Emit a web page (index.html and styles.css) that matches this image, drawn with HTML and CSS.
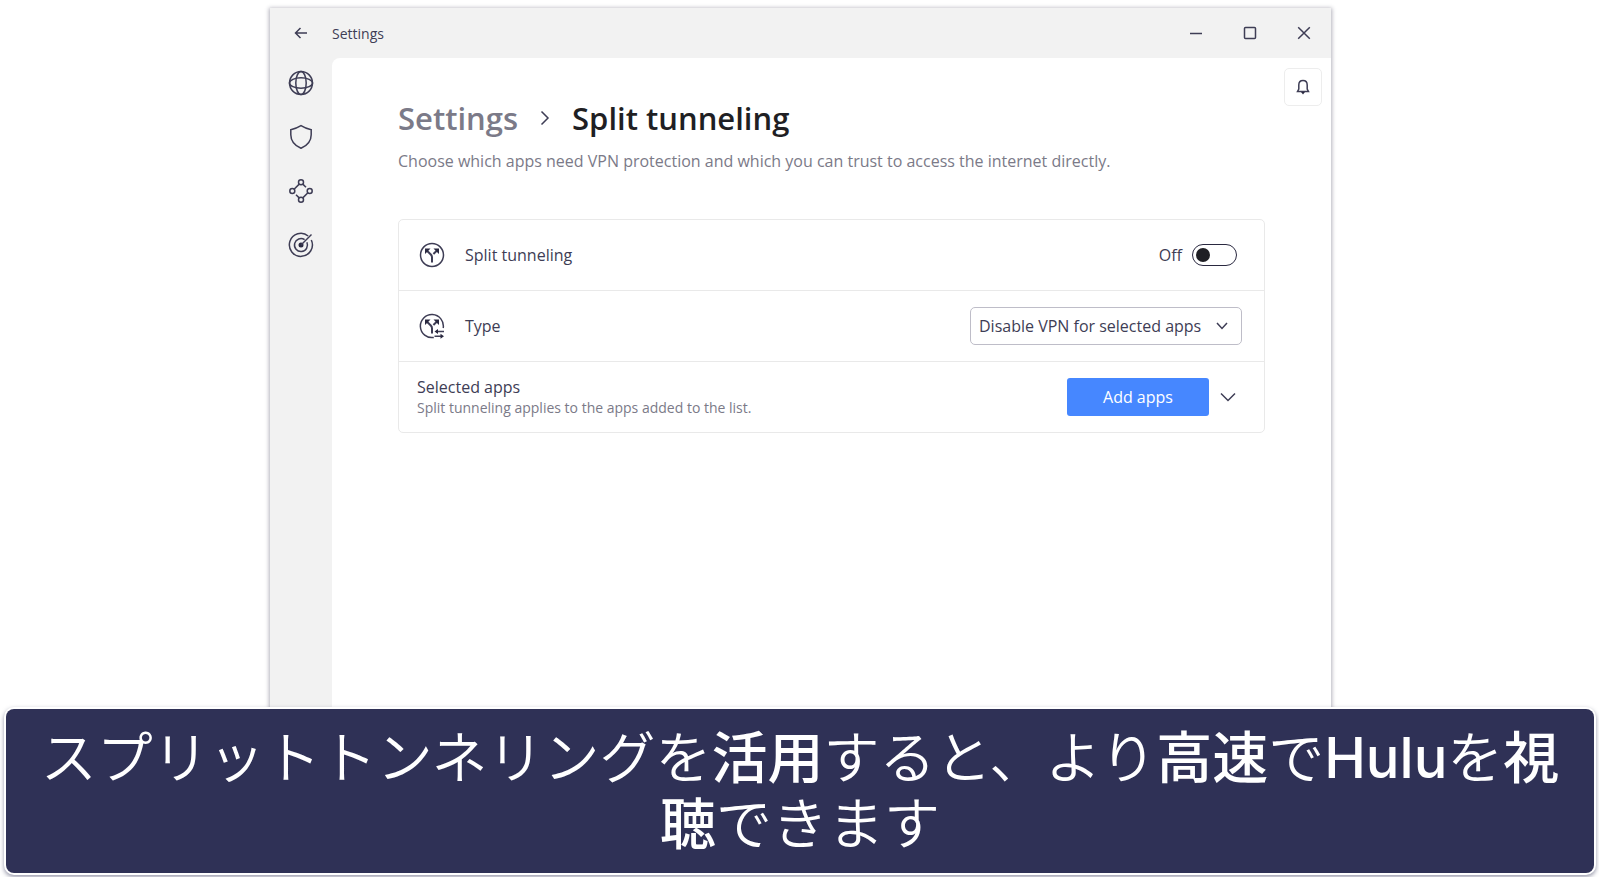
FILE: index.html
```html
<!DOCTYPE html>
<html lang="ja">

<head>
  <meta charset="UTF-8">
  <meta name="viewport" content="width=device-width, initial-scale=1.0">
  <title>Split tunneling</title>
  <link rel="stylesheet" href="styles.css">
</head>

<body>

  <div class="window" lang="en">
    <header class="titlebar">
      <button type="button" class="back" aria-label="Back">
        <svg width="14" height="14" viewBox="0 0 14 14"><path d="M13 7H1.5M6.5 2L1.5 7l5 5" /></svg>
      </button>
      <span class="title">Settings</span>
      <button type="button" class="control" aria-label="Minimize">
        <svg width="14" height="14" viewBox="0 0 14 14"><path d="M1 7.5h12" /></svg>
      </button>
      <button type="button" class="control" aria-label="Maximize">
        <svg width="14" height="14" viewBox="0 0 14 14"><rect x="1.5" y="1.5" width="11" height="11" rx="1" /></svg>
      </button>
      <button type="button" class="control" aria-label="Close">
        <svg width="14" height="14" viewBox="0 0 14 14"><path d="M1.2 1.2l11.6 11.6M12.8 1.2L1.2 12.8" /></svg>
      </button>
    </header>

    <div class="content">
      <nav class="sidebar">
        <a href="#" aria-label="VPN">
          <svg width="26" height="26" viewBox="0 0 26 26">
            <circle cx="13" cy="13" r="11.5" />
            <ellipse cx="13" cy="13" rx="5.2" ry="11.5" />
            <ellipse cx="13" cy="13" rx="11.5" ry="5.2" />
          </svg>
        </a>
        <a href="#" aria-label="Threat protection">
          <svg width="26" height="26" viewBox="0 0 26 26">
            <path d="M13 1.7c3 1.9 6.4 3.3 10.2 4v5c0 6-3.7 10.7-10.2 13.6C6.5 21.4 2.8 16.7 2.8 10.7v-5C6.6 5 10 3.6 13 1.7z" />
          </svg>
        </a>
        <a href="#" aria-label="Meshnet">
          <svg width="26" height="26" viewBox="0 0 26 26">
            <circle cx="13" cy="4.3" r="2.5" />
            <circle cx="4.3" cy="13" r="2.5" />
            <circle cx="21.7" cy="13" r="2.5" />
            <circle cx="13" cy="21.7" r="2.5" />
            <path d="M6.1 11.2l5.1-5.1M14.8 6.1l3.2 3.2M19.9 14.8l-5.1 5.1M11.2 19.9L8 16.7" />
          </svg>
        </a>
        <a href="#" aria-label="Dark web monitor">
          <svg width="26" height="26" viewBox="0 0 26 26">
            <path d="M20.2 4A11.5 11.5 0 1 0 23.3 8" />
            <path d="M16.6 7.6A6.5 6.5 0 1 0 18.9 10.3" />
            <circle class="fill" cx="13" cy="13" r="2.5" />
            <path d="M13 13L23.5 2.5" />
          </svg>
        </a>
      </nav>

      <main class="page">
        <button type="button" class="bell" aria-label="Notifications">
          <svg width="16" height="16" viewBox="0 0 16 16">
            <path d="M8 1.5c-2.7 0-4.2 1.9-4.2 4.5v4L2.5 12.5h11L12.2 10V6c0-2.6-1.5-4.5-4.2-4.5z" />
            <path class="fill" d="M6 13h4L8 15.5z" />
          </svg>
        </button>

        <h1>
          <a href="#">Settings</a>
          <svg width="10" height="16" viewBox="0 0 10 16"><path d="M1.5 1.5L8 8l-6.5 6.5" /></svg>
          <span>Split tunneling</span>
        </h1>
        <p class="intro">Choose which apps need VPN protection and which you can trust to access the internet directly.</p>

        <section class="card">
          <div class="row">
            <svg width="26" height="26" viewBox="0 0 26 26">
              <circle cx="13" cy="13" r="11.5" />
              <path class="thick" d="M13 20.5v-5.3c0-1.2-.4-1.9-1.2-2.7L8 8.7M14.4 11.9L18 8.5" />
              <path class="fill" d="M6 6.5h5.5L6 12zM20 6.5h-5.5L20 12z" />
            </svg>
            <label for="split">Split tunneling</label>
            <div class="switch">
              <span>Off</span>
              <input type="checkbox" role="switch" id="split">
            </div>
          </div>

          <div class="row">
            <svg width="26" height="26" viewBox="0 0 26 26">
              <path d="M14.8 24.4A11.5 11.5 0 1 1 24.2 15" />
              <path class="thick" d="M13 20.5v-5.3c0-1.2-.4-1.9-1.2-2.7L8 8.7M14.4 11.9L18 8.5" />
              <path class="fill" d="M6 6.5h5.5L6 12zM20 6.5h-5.5L20 12z" />
              <path d="M17 18.5h8M15.5 23.3h7" />
              <path class="fill" d="M19 16v5l-3.5-2.5zM21.5 20.8v5l3.5-2.5z" />
            </svg>
            <label for="type">Type</label>
            <div class="select">
              <select id="type">
                <option>Disable VPN for selected apps</option>
                <option>Enable VPN for selected apps</option>
              </select>
              <svg width="12" height="8" viewBox="0 0 12 8"><path d="M1 1l5 5.5L11 1" /></svg>
            </div>
          </div>

          <div class="row apps">
            <div class="apps-text">
              <h2>Selected apps</h2>
              <p>Split tunneling applies to the apps added to the list.</p>
            </div>
            <button type="button" class="add">Add apps</button>
            <button type="button" class="expand" aria-label="Show apps">
              <svg width="16" height="10" viewBox="0 0 16 10"><path d="M1 1.5l7 7 7-7" /></svg>
            </button>
          </div>
        </section>
      </main>
    </div>
  </div>

  <p class="caption">スプリットトンネリングを<b>活用</b>すると、より<b>高速</b>で<b class="latin">Hulu</b>を<b>視聴</b>できます</p>

</body>

</html>
```
FILE: styles.css
```css
* {
  box-sizing: border-box;
}

body {
  display: flex;
  flex-direction: column;
  min-height: 100vh;
  margin: 0;
  background-color: #fff;
  color: #3e3d55;
  font-family: "Open Sans", "Noto Sans", sans-serif;
  font-size: 16px;
}

button {
  display: flex;
  align-items: center;
  justify-content: center;
  padding: 0;
  border: none;
  background: none;
  color: inherit;
  font: inherit;
  cursor: pointer;
}

a {
  color: inherit;
  text-decoration: none;
}

svg {
  flex: none;
  display: block;
  fill: none;
  stroke: #3e3d55;
  stroke-width: 1.5;
}

.fill {
  fill: #2a2940;
  stroke: none;
}

.thick {
  stroke-width: 2;
}

/* app window */
.window {
  flex: 1;
  display: flex;
  flex-direction: column;
  margin: 8px 268px 0 270px;
  background-color: #f2f2f2;
  box-shadow: 0 1px 4px 1px rgba(62, 61, 85, 0.4);
}

.titlebar {
  display: flex;
  align-items: center;
  height: 50px;
}

.back {
  width: 62px;
  height: 50px;
}

.title {
  flex: 1;
  font-size: 14px;
}

.control {
  width: 54px;
  height: 50px;
}

.content {
  flex: 1;
  display: flex;
}

.sidebar {
  display: flex;
  flex-direction: column;
  align-items: center;
  gap: 28px;
  width: 62px;
  padding-top: 12px;
}

.page {
  flex: 1;
  position: relative;
  padding: 38px 66px 0;
  border-top-left-radius: 8px;
  background-color: #fff;
}

.bell {
  position: absolute;
  top: 10px;
  right: 9px;
  width: 38px;
  height: 38px;
  border: 1px solid #ededed;
  border-radius: 5px;
}

h1 {
  display: flex;
  align-items: center;
  gap: 22px;
  margin: 0;
  color: #1f1f24;
  font-size: 31px;
  font-weight: 600;
  line-height: 44px;
}

h1 a {
  color: #7b7a88;
}

.intro {
  margin: 9px 0 46px;
  color: #7b7a88;
  line-height: 24px;
}

/* settings card */
.card {
  border: 1px solid #e9e9e9;
  border-radius: 5px;
}

.row {
  display: flex;
  align-items: center;
  height: 70px;
  padding: 0 22px 0 20px;
}

.row + .row {
  height: 71px;
  border-top: 1px solid #e9e9e9;
}

.row label {
  flex: 1;
  margin-left: 20px;
}

.switch {
  display: flex;
  align-items: center;
  gap: 10px;
  margin-right: 5px;
}

.switch input {
  appearance: none;
  width: 45px;
  height: 22px;
  margin: 0;
  padding: 3px;
  border: 1px solid #2a2940;
  border-radius: 11px;
}

.switch input::before {
  content: "";
  display: block;
  width: 14px;
  height: 14px;
  border-radius: 50%;
  background-color: #1f1f24;
}

.switch input:checked::before {
  margin-left: auto;
}

.select {
  display: grid;
  align-items: center;
}

.select select,
.select svg {
  grid-area: 1 / 1;
}

.select svg {
  justify-self: end;
  margin-right: 14px;
  pointer-events: none;
}

select {
  appearance: none;
  width: 272px;
  height: 38px;
  padding: 0 8px;
  border: 1px solid #bebdc8;
  border-radius: 5px;
  background-color: #fff;
  color: inherit;
  font: inherit;
}

.apps {
  padding-left: 18px;
}

.apps-text {
  flex: 1;
}

h2 {
  margin: 0;
  font-size: 16px;
  font-weight: 400;
  line-height: 22px;
}

.apps-text p {
  margin: 0;
  color: #7b7a88;
  font-size: 14px;
  line-height: 20px;
}

.add {
  width: 142px;
  height: 38px;
  border-radius: 3px;
  background-color: #4687ff;
  color: #fff;
}

.expand {
  width: 38px;
  height: 38px;
  margin-right: -5px;
}

/* caption over the bottom of the page */
.caption {
  position: relative;
  margin: 0 5px 4px 6px;
  padding: 12px 32px 20px;
  border-radius: 8px;
  background-color: #2f3156;
  box-shadow: 0 0 0 2px #fff, 0 2px 4px 2px rgba(47, 49, 86, 0.5);
  color: #fff;
  font-family: "Noto Sans CJK JP", sans-serif;
  font-size: 56px;
  font-weight: 350;
  line-height: 66px;
  text-align: center;
}

.caption b {
  font-weight: 500;
}

.caption .latin {
  font-family: Inter, sans-serif;
  line-height: 48px;
}
```
